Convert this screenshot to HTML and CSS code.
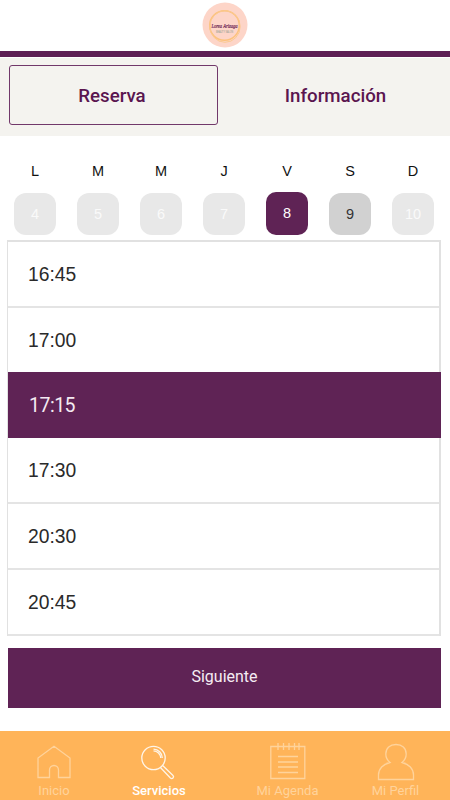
FILE: index.html
```html
<!DOCTYPE html>
<html lang="es">

<head>
    <meta charset="UTF-8">
    <meta name="viewport" content="width=device-width, initial-scale=1.0">
    <title>Reserva</title>
    <link rel="stylesheet" href="styles.css">
</head>

<body>

    <header class="header">
        <svg class="logo" width="46" height="46" viewBox="0 0 46 46">
            <circle cx="23" cy="23" r="22.5" fill="#fdd5c8" />
            <circle cx="22.5" cy="23.5" r="14.8" fill="none" stroke="#fcc27c" stroke-width="1.5" />
            <ellipse cx="23" cy="24.5" rx="15.2" ry="15.8" fill="none" stroke="#fbc98f" stroke-width="1" />
            <text class="logo-name" x="22.5" y="25.8" text-anchor="middle" textLength="26" lengthAdjust="spacingAndGlyphs">Lorea Arizaga</text>
            <text class="logo-sub" x="22.5" y="30.5" text-anchor="middle" textLength="17" lengthAdjust="spacingAndGlyphs">BEAUTY SALON</text>
        </svg>
    </header>

    <nav class="tabs">
        <a class="tab active">Reserva</a>
        <a class="tab">Información</a>
    </nav>

    <main class="content">
        <div class="week">
            <div class="day"><span>L</span><b>4</b></div>
            <div class="day"><span>M</span><b>5</b></div>
            <div class="day"><span>M</span><b>6</b></div>
            <div class="day"><span>J</span><b>7</b></div>
            <div class="day selected"><span>V</span><b>8</b></div>
            <div class="day open"><span>S</span><b>9</b></div>
            <div class="day"><span>D</span><b>10</b></div>
        </div>

        <ul class="hours">
            <li>16:45</li>
            <li>17:00</li>
            <li class="selected">17:15</li>
            <li>17:30</li>
            <li>20:30</li>
            <li>20:45</li>
        </ul>

        <button class="next">Siguiente</button>
    </main>

    <footer class="menu">
        <a class="item home">
            <svg width="38" height="40" viewBox="0 0 38 40">
                <path d="M3 35.5V16L19 4.2L35 16V35.5H23.5V28a4.5 4.5 0 0 0-9 0V35.5Z" />
            </svg>
            <span>Inicio</span>
        </a>
        <a class="item services active">
            <svg width="38" height="40" viewBox="0 0 38 40">
                <circle cx="13.5" cy="16" r="11.7" />
                <path d="M13.5 7.2a9 9 0 0 1 8.8 8.800M13.500 8.800a7.500 7.500 0 0 1 7.200 7.200" />
                <path d="M20.200 25.300L30.400 36q1.400 1.200 2.600 0t0-2.500L22.400 23.300" />
            </svg>
            <span>Servicios</span>
        </a>
        <a class="item agenda">
            <svg width="38" height="40" viewBox="0 0 38 40">
                <path d="M1.800 4.500V36.500H35.800V4.500Z" />
                <path d="M9 1v7M14.500 1v7M20 1v7M25.500 1v7M30 1v7M9 14.500h20M9 20h20M9 25h20M9 30.500h20" />
            </svg>
            <span>Mi Agenda</span>
        </a>
        <a class="item profile">
            <svg width="38" height="40" viewBox="0 0 38 40">
                <path d="M13 20.500C6 22 1.500 27 1.500 33V37.500H36.500V33C36.500 27 32 22 25 20.500C28 18 29.200 15.500 29.200 12C29.200 6 25 2.500 19 2.500S8.800 6 8.800 12C8.800 15.500 10 18 13 20.500Z" />
            </svg>
            <span>Mi Perfil</span>
        </a>
    </footer>

</body>

</html>
```
FILE: styles.css
```css
* {
    box-sizing: border-box;
}

body {
    margin: 0;
    height: 800px;
    display: flex;
    flex-direction: column;
    background: #fff;
    font-family: Roboto, sans-serif;
    overflow: hidden;
}

.header {
    height: 57px;
    padding-top: 2px;
    text-align: center;
    border-bottom: 6px solid #5e1f55;
}

.logo {
    display: block;
    margin: 0 auto;
}

.logo-name {
    font-family: "Liberation Serif", serif;
    font-size: 6px;
    font-style: italic;
    fill: #68204f;
    stroke: #68204f;
    stroke-width: 0.2px;
}

.logo-sub {
    font-family: "Liberation Sans", sans-serif;
    font-size: 3px;
    fill: #8b9a8c;
}

.tabs {
    display: flex;
    height: 78px;
    margin-top: 1px;
    padding: 7px 9px 11px;
    background: #f4f3ef;
}

.tab {
    width: 209px;
    border: 1px solid transparent;
    border-radius: 3px;
    color: #5a154f;
    font-size: 18.7px;
    font-weight: 500;
    line-height: 60px;
    text-align: center;
}

.tab + .tab {
    margin-left: 13px;
}

.tab.active {
    padding-right: 3px;
    border-color: #71386a;
}

.content {
    height: 595px;
    padding: 27px 9px 0 7px;
}

.week {
    display: flex;
    padding-left: 7px;
    font-family: "Liberation Sans", sans-serif;
    font-size: 14.5px;
}

.day {
    width: 42px;
    margin-right: 21px;
    flex: none;
    text-align: center;
    color: #111;
}

.day span {
    display: block;
    height: 30px;
    line-height: 17px;
}

.day b {
    display: block;
    height: 42px;
    border-radius: 12px;
    background: #e8e8e8;
    color: #fafafa;
    font-weight: normal;
    line-height: 43px;
}

.day.selected b {
    height: 43px;
    margin-top: -1px;
    border-radius: 10px;
    background: #5f2355;
    color: #fff;
}

.day.open b {
    background: #d1d1d1;
    color: #333;
}

.hours {
    height: 396px;
    margin: 5px 0 0;
    padding: 0;
    list-style: none;
    display: flex;
    flex-direction: column;
    border: 1px solid #e1e1e1;
    border-width: 2px 2px 0 1px;
    font-family: "Liberation Sans", sans-serif;
    font-size: 19.3px;
    color: #2a2a2a;
}

.hours li {
    flex: 1 1 0;
    min-height: 0;
    padding-left: 20px;
    line-height: 66px;
    border-bottom: 2px solid #e4e4e4;
}

.hours li.selected {
    margin: -2px -2px 0 0;
    padding-left: 21px;
    border-color: #5f2355;
    background: #5f2355;
    color: #f4eaf2;
    font-family: Roboto, sans-serif;
    font-size: 19.5px;
    letter-spacing: -0.5px;
    line-height: 68px;
}

.next {
    display: block;
    width: 433px;
    height: 60px;
    margin: 12px 0 0 1px;
    padding: 0 0 4px;
    border: 0;
    background: #5f2355;
    color: #f5ecf3;
    font-family: Roboto, sans-serif;
    font-size: 16px;
}

.menu {
    display: flex;
    height: 69px;
    background: #ffb459;
    color: #ffd39b;
    font-size: 13px;
}

.item {
    width: 108px;
    flex: none;
    display: flex;
    flex-direction: column;
    align-items: center;
    padding-top: 11px;
}

.item svg {
    fill: none;
    stroke: #ffd39b;
    stroke-width: 1.3;
}

.item span {
    line-height: 17px;
    white-space: nowrap;
}

.item.active {
    color: #fff;
    font-weight: 500;
}

.item.active svg {
    stroke: #fff5e8;
}

.item.services {
    width: 102px;
}

.item.agenda {
    width: 155px;
}

.item.profile {
    width: 61px;
}
```
